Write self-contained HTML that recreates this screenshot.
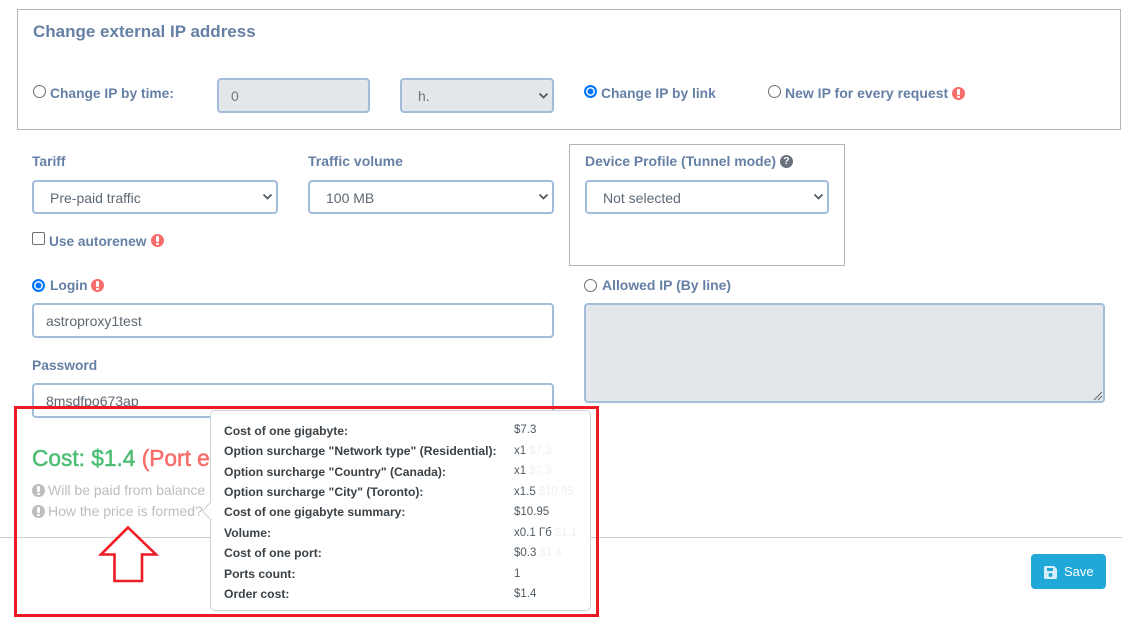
<!DOCTYPE html>
<html><head><meta charset="utf-8">
<style>
html,body{margin:0;padding:0;width:1133px;height:618px;overflow:hidden;background:#fff}
body{position:relative;font-family:"Liberation Sans",sans-serif;font-size:14px;color:#5c6873}
.t{position:absolute;white-space:nowrap;line-height:16px}
.l{font-weight:700;color:#6680a5;font-size:13.800px}
.box{position:absolute;border:1px solid #b5b5b5;box-sizing:border-box}
.f{position:absolute;box-sizing:border-box;border:2px solid #a4bcdc;border-radius:4px;background:#fff}
.d{background:#e4e7ea}
.chev{position:absolute;width:11px;height:7px}
.r{position:absolute;width:13px;height:13px;border-radius:50%;border:1px solid #6f6f6f;box-sizing:border-box;background:#fff}
.r.on{border:2px solid #0075ff;background:#0075ff;box-shadow:inset 0 0 0 1.500px #fff}
.i{position:absolute;width:13px;height:13px;border-radius:50%;background:#f86c6b}
.i::before{content:"";position:absolute;left:5.200px;top:2.400px;width:2.600px;height:5.400px;background:#fff;border-radius:1px}
.i::after{content:"";position:absolute;left:5.200px;top:8.600px;width:2.600px;height:2.400px;background:#fff;border-radius:1px}
.g{background:#bdbdbd}
.q{position:absolute;width:13px;height:13px;border-radius:50%;background:#67727c;color:#fff;font:700 10.500px/13px "Liberation Sans",sans-serif;text-align:center}
.k{position:absolute;left:224px;margin-top:1px;font-weight:700;font-size:12.150px;color:#3a4248;line-height:14px;white-space:nowrap}
.v{position:absolute;left:514px;font-size:11.500px;color:#4f5a63;line-height:14px;white-space:nowrap}
.v span{color:#eef0f1;margin-left:3px}
</style></head><body>

<div class="box" style="left:17px;top:9px;width:1104px;height:121px"></div>
<div class="t" style="left:33px;top:23px;font-size:17px;font-weight:700;color:#6680a5;line-height:18px">Change external IP address</div>

<div class="r" style="left:33px;top:85px"></div>
<div class="t l" style="left:50px;top:86px">Change IP by time:</div>
<div class="f d" style="left:217px;top:78px;width:153px;height:35px"></div>
<div class="t" style="left:231px;top:88px;color:#6e7880">0</div>
<div class="f d" style="left:400px;top:78px;width:154px;height:35px"></div>
<div class="t" style="left:418px;top:88px;color:#6e7880">h.</div>
<svg class="chev" style="left:538px;top:92px" viewBox="0 0 11 7"><path d="M1.500 1.500l4 4 4-4" fill="none" stroke="#4d5760" stroke-width="1.700"/></svg>

<div class="r on" style="left:584px;top:85px"></div>
<div class="t l" style="left:601px;top:86px">Change IP by link</div>
<div class="r" style="left:768px;top:85px"></div>
<div class="t l" style="left:785px;top:85px;font-size:14px">New IP for every request</div>
<div class="i" style="left:952px;top:87px"></div>

<div class="t l" style="left:32px;top:154px">Tariff</div>
<div class="f" style="left:32px;top:180px;width:246px;height:34px"></div>
<div class="t" style="left:50px;top:190px">Pre-paid traffic</div>
<svg class="chev" style="left:262px;top:193px" viewBox="0 0 11 7"><path d="M1.500 1.500l4 4 4-4" fill="none" stroke="#4d5760" stroke-width="1.700"/></svg>

<div class="t l" style="left:308px;top:153px;font-size:14px">Traffic volume</div>
<div class="f" style="left:308px;top:180px;width:246px;height:34px"></div>
<div class="t" style="left:326px;top:190px">100 MB</div>
<svg class="chev" style="left:538px;top:193px" viewBox="0 0 11 7"><path d="M1.500 1.500l4 4 4-4" fill="none" stroke="#4d5760" stroke-width="1.700"/></svg>

<div class="box" style="left:569px;top:144px;width:276px;height:122px"></div>
<div class="t l" style="left:585px;top:153px;font-size:13.950px">Device Profile (Tunnel mode)</div>
<div class="q" style="left:780px;top:155px">?</div>
<div class="f" style="left:585px;top:180px;width:244px;height:34px"></div>
<div class="t" style="left:603px;top:190px">Not selected</div>
<svg class="chev" style="left:813px;top:193px" viewBox="0 0 11 7"><path d="M1.500 1.500l4 4 4-4" fill="none" stroke="#4d5760" stroke-width="1.700"/></svg>

<div style="position:absolute;left:32px;top:232px;width:13px;height:13px;box-sizing:border-box;border:1px solid #6f6f6f;border-radius:2px;background:#fff"></div>
<div class="t l" style="left:49px;top:234px;font-size:13.700px">Use autorenew</div>
<div class="i" style="left:151px;top:234px"></div>

<div class="r on" style="left:32px;top:279px"></div>
<div class="t l" style="left:50px;top:278px">Login</div>
<div class="i" style="left:91px;top:279px"></div>
<div class="f" style="left:32px;top:303px;width:522px;height:35px"></div>
<div class="t" style="left:46px;top:313px">astroproxy1test</div>

<div class="t l" style="left:32px;top:358px">Password</div>
<div class="f" style="left:32px;top:383px;width:522px;height:35px"></div>
<div class="t" style="left:46px;top:393px">8msdfpo673ap</div>

<div class="r" style="left:584px;top:279px"></div>
<div class="t l" style="left:602px;top:277px;font-size:13.950px">Allowed IP (By line)</div>
<div class="f d" style="left:584px;top:303px;width:521px;height:100px"></div>
<svg style="position:absolute;left:1093px;top:391px" width="10" height="10" viewBox="0 0 10 10"><path d="M1 9L9 1M5 9L9 5" stroke="#666" stroke-width="1"/></svg>

<div style="position:absolute;left:17px;top:408px;width:560px;height:12px;background:#fff;"></div>
<div style="position:absolute;left:32px;top:408px;width:522px;height:10px;box-sizing:border-box;border:2px solid #a4bcdc;border-top:0;border-radius:0 0 4px 4px;background:#fff"></div>

<div class="t" style="left:32px;top:445px;font-size:22.700px;line-height:26px;color:#4dbd74;-webkit-text-stroke:.5px #4dbd74">Cost: $1.4 <span style="color:#f86c6b;-webkit-text-stroke:.5px #f86c6b">(Port e</span></div>
<div class="i g" style="left:32px;top:484px"></div>
<div class="t" style="left:48px;top:482px;color:#bdbdbd">Will be paid from balance</div>
<div class="i g" style="left:32px;top:505px"></div>
<div class="t" style="left:48px;top:503px;color:#bdbdbd">How the price is formed?</div>

<div style="position:absolute;left:0;top:537px;width:1122px;height:1px;background:#cfcfcf"></div>

<svg style="position:absolute;left:98px;top:524px" width="62" height="60" viewBox="98 524 62 60"><path d="M128 527.500L156 554.500H142V581H114.500V554.500H101Z" fill="#fff" stroke="#ed1c24" stroke-width="2.600"/></svg>

<div style="position:absolute;left:210px;top:410px;width:381px;height:201px;box-sizing:border-box;border:1px solid #cfd2d4;border-radius:5px;background:#fff"></div>
<svg style="position:absolute;left:201px;top:501px" width="11" height="20" viewBox="0 0 11 20"><path d="M10 1L1.500 10L10 19" fill="#fff" stroke="#cfd2d4"/><path d="M10 1.500h1.500v17H10z" fill="#fff"/></svg>

<div class="k" style="top:423px">Cost of one gigabyte:</div><div class="v" style="top:423px">$7.3</div>
<div class="k" style="top:443px">Option surcharge "Network type" (Residential):</div><div class="v" style="top:444px">x1<span>$7.3</span></div>
<div class="k" style="top:464px">Option surcharge "Country" (Canada):</div><div class="v" style="top:464px">x1<span>$7.3</span></div>
<div class="k" style="top:484px">Option surcharge "City" (Toronto):</div><div class="v" style="top:485px">x1.5<span>$10.95</span></div>
<div class="k" style="top:504px">Cost of one gigabyte summary:</div><div class="v" style="top:505px">$10.95</div>
<div class="k" style="top:525px">Volume:</div><div class="v" style="top:526px">x0.1 Гб<span>$1.1</span></div>
<div class="k" style="top:545px">Cost of one port:</div><div class="v" style="top:546px">$0.3<span>$1.4</span></div>
<div class="k" style="top:566px">Ports count:</div><div class="v" style="top:567px">1</div>
<div class="k" style="top:586px">Order cost:</div><div class="v" style="top:587px">$1.4</div>

<div style="position:absolute;left:1031px;top:554px;width:75px;height:35px;background:#20a8d8;border-radius:4px"></div>
<svg style="position:absolute;left:1044px;top:566px" width="13" height="13" viewBox="0 0 13 13"><path d="M1.500 0H10L13 3V11.500A1.500 1.500 0 0 1 11.500 13H1.500A1.500 1.500 0 0 1 0 11.500V1.500A1.500 1.500 0 0 1 1.500 0ZM3 2V5H9V2ZM6.500 7A2 2 0 1 0 6.500 11A2 2 0 1 0 6.500 7Z" fill="#d5eef8" fill-rule="evenodd"/></svg>
<div class="t" style="left:1064px;top:564px;color:#fff;font-size:13px">Save</div>

<div style="position:absolute;left:14px;top:405.500px;width:585px;height:211.500px;box-sizing:border-box;border:3px solid #ed1c24"></div>
</body></html>
